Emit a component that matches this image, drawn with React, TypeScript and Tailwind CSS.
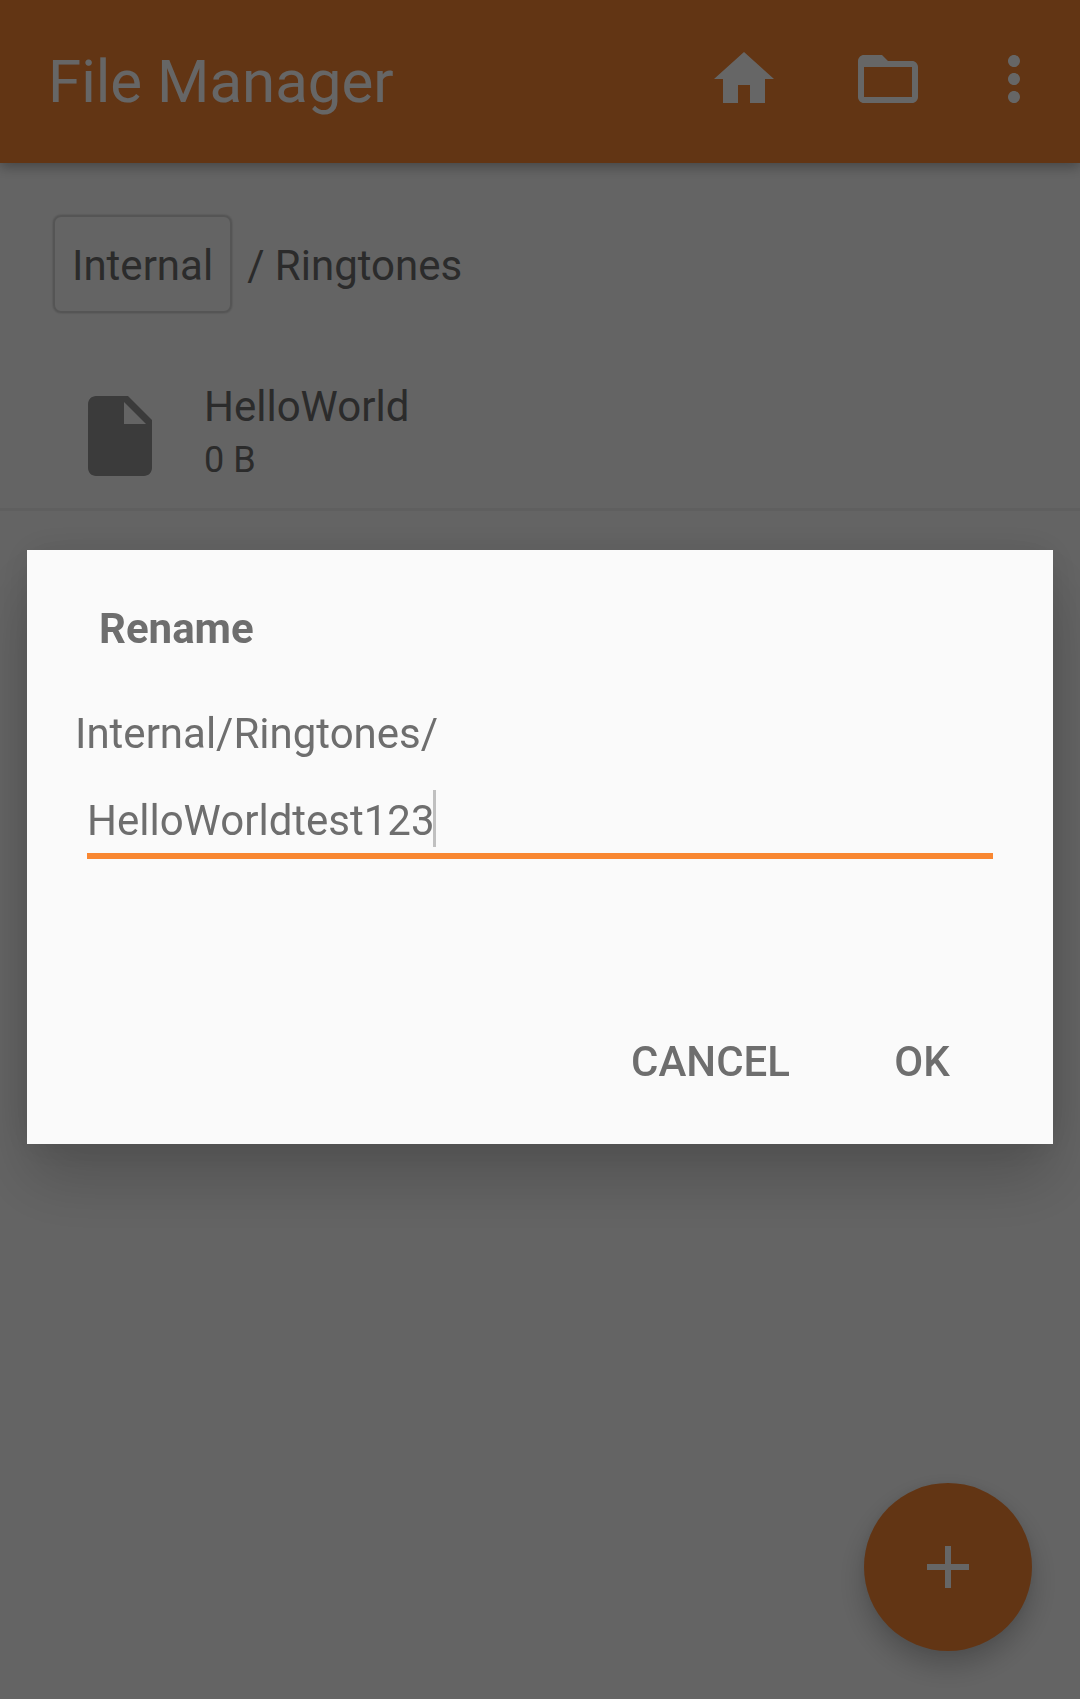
import { useState } from "react";

function Icon({ path, className }: { path: string; className: string }) {
  return (
    <svg viewBox="0 0 24 24" fill="currentColor" className={className} aria-hidden="true">
      <path d={path} />
    </svg>
  );
}

const icons = {
  home: "M10 20v-6h4v6h5v-8h3L12 3 2 12h3v8z",
  folder:
    "M20 6h-8l-2-2H4c-1.1 0-1.99.9-1.99 2L2 18c0 1.1.9 2 2 2h16c1.1 0 2-.9 2-2V8c0-1.1-.9-2-2-2zm0 12H4V8h16v10z",
  more: "M12 8c1.1 0 2-.9 2-2s-.9-2-2-2-2 .9-2 2 .9 2 2 2zm0 2c-1.1 0-2 .9-2 2s.9 2 2 2 2-.9 2-2-.9-2-2-2zm0 6c-1.1 0-2 .9-2 2s.9 2 2 2 2-.9 2-2-.9-2-2-2z",
  file: "M6 2c-1.1 0-1.99.9-1.99 2L4 20c0 1.1.89 2 1.99 2H18c1.1 0 2-.9 2-2V8l-6-6H6zm7 7V3.5L18.5 9H13z",
  add: "M19 13h-6v6h-2v-6H5v-2h6V5h2v6h6v2z",
};

function AppBar() {
  return (
    <header className="flex items-start bg-[#f58433] pt-[43px] pr-[30px] pb-[42px] pl-12 text-white shadow-[0_4px_12px_rgba(0,0,0,0.3)]">
      <h1 className="grow text-[60px] leading-[78px]">File Manager</h1>
      <button type="button" aria-label="Home" className="mr-[72px]">
        <Icon path={icons.home} className="size-[72px]" />
      </button>
      <button type="button" aria-label="Folders" className="mr-[54px]">
        <Icon path={icons.folder} className="size-[72px]" />
      </button>
      <button type="button" aria-label="More options">
        <Icon path={icons.more} className="size-[72px]" />
      </button>
    </header>
  );
}

function Breadcrumbs() {
  return (
    <nav aria-label="Path" className="flex items-start px-[53px] py-[52px] text-[42px] leading-[48px]">
      <button
        type="button"
        className="rounded-lg border-2 border-[#d4d4d4] px-[17px] pt-[25px] pb-[21px] shadow-[0_0_2px_rgba(0,0,0,0.25)]"
      >
        Internal
      </button>
      <span className="pt-[27px] pl-[15px]">/ Ringtones</span>
    </nav>
  );
}

function FileRow({ name, size }: { name: string; size: string }) {
  return (
    <li className="flex items-center gap-9 border-b-3 border-[#eeeeee] px-[72px] pt-[18px] pb-[19px]">
      <Icon path={icons.file} className="size-24 text-[#939393]" />
      <div className="flex flex-col gap-2 pb-2">
        <span className="text-[42px] leading-[48px]">{name}</span>
        <span className="text-[36px] leading-[42px]">{size}</span>
      </div>
    </li>
  );
}

function RenameDialog() {
  const [name, setName] = useState("HelloWorldtest123");
  return (
    <div className="fixed inset-0 flex items-center bg-black/60 px-[27px] pb-[5px]">
      <form
        role="dialog"
        aria-labelledby="rename-title"
        onSubmit={(e) => e.preventDefault()}
        className="w-full bg-[#fafafa] pt-[55px] pb-7 text-[42px] leading-[48px] text-[#6e6e6e] shadow-[0_36px_60px_rgba(0,0,0,0.18),0_0_36px_rgba(0,0,0,0.1)]"
      >
        <h2 id="rename-title" className="px-[72px] font-bold">
          Rename
        </h2>
        <label htmlFor="rename-input" className="block px-12 pt-[57px]">
          Internal/Ringtones/
        </label>
        <div className="relative mx-[60px] mt-[39px]">
          <input
            id="rename-input"
            type="text"
            value={name}
            onChange={(e) => setName(e.target.value)}
            className="block w-full border-b-6 border-[#f98731] pb-2 leading-[48px] caret-transparent outline-none"
          />
          <span className="absolute -top-[7px] left-[346px] h-[57px] w-[3px] bg-[#c0c0c0]" />
        </div>
        <div className="flex justify-end pt-[149px] pr-[35px] font-medium">
          <button type="submit" className="order-2 h-[108px] w-48">
            OK
          </button>
          <button type="button" className="h-[108px] px-9">
            CANCEL
          </button>
        </div>
      </form>
    </div>
  );
}

export default function App() {
  return (
    <div className="min-h-screen bg-[#fafafa] font-['Roboto',sans-serif] text-[#6c6c6c]">
      <AppBar />
      <main>
        <Breadcrumbs />
        <ul>
          <FileRow name="HelloWorld" size="0 B" />
        </ul>
      </main>
      <button
        type="button"
        aria-label="Add"
        className="fixed right-12 bottom-12 flex size-[168px] items-center justify-center rounded-full bg-[#f58433] text-white shadow-[0_14px_28px_rgba(0,0,0,0.22),0_0_12px_rgba(0,0,0,0.06)]"
      >
        <Icon path={icons.add} className="size-[72px]" />
      </button>
      <RenameDialog />
    </div>
  );
}
